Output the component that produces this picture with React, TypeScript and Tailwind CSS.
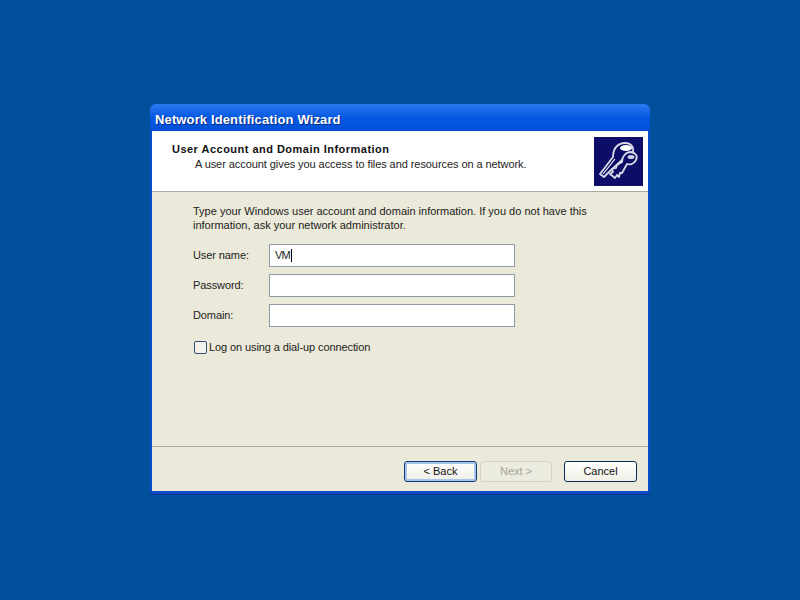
const font = { fontFamily: '"Liberation Sans", sans-serif' }

const KeysIcon = () => (
    <svg width="49" height="49" viewBox="0 0 49 49" className="block">
        <defs>
            <pattern id="dots" width="2" height="2" patternUnits="userSpaceOnUse">
                <rect width="2" height="2" fill="#0a0a60" />
                <rect width="1" height="1" fill="#16167c" />
            </pattern>
        </defs>
        <rect width="49" height="49" fill="url(#dots)" />
        <g fill="#0c0c66" stroke="#dcdce8" strokeWidth="1.8" strokeLinejoin="round">
            <path d="M6 37 L19 20 C19 10 25 6 31 6 C37 6 40 10 39 15 L28 23 L15 35 L10 40 Z" />
            <path d="M21 41 L16 37 L19 35 L18 32 L22 31 L23 28 L28 25 C28 19 32 15 37 15 C42 16 44 19 42 23 C40 27 36 28 33 27 L28 36 L26 36 L25 40 L23 38 Z" />
        </g>
        <path d="M9 37 L21 22" stroke="#ffffff" strokeWidth="1.2" />
        <ellipse cx="32" cy="11" rx="6" ry="3" fill="#ffffff" />
        <ellipse cx="37" cy="20" rx="3.5" ry="2" fill="#d0d0e4" />
    </svg>
)

const Field = ({ label, value }: { label: string; value?: string }) => (
    <div className="flex items-center h-[23px]">
        <label className="w-[76px] text-[11px] text-[#222] tracking-[-0.1px]">{label}</label>
        <div className="w-[246px] h-[23px] bg-white border border-[#8f9aa6] flex items-center pl-[5px] text-[11px] text-[#222] tracking-[-0.8px]">
            {value}
            {value && <span className="w-px h-[13px] ml-px bg-black" />}
        </div>
    </div>
)

const WizardButton = ({ label, isDefault, disabled }: { label: string; isDefault?: boolean; disabled?: boolean }) => {
    let cls = 'w-[73px] border-[#0a2a5c] bg-gradient-to-b from-white to-[#f0efe6] text-[#111]'
    if (isDefault) cls = 'w-[73px] border-[#0f3a78] bg-gradient-to-b from-white to-[#f0efe6] text-[#111] shadow-[inset_0_0_0_2px_#a9c4ea]'
    if (disabled) cls = 'w-[72px] border-[#d6d3c4] bg-[#ecebe0] text-[#a5a496]'
    return (
        <button className={`h-[21px] rounded-[3px] border text-[11px] ${cls}`}>
            {label}
        </button>
    )
}

export default function App() {
    return (
        <div className="w-[800px] h-[600px] bg-[#02509b] flex items-center justify-center pb-px" style={font}>
            <div className="w-[500px] h-[391px] flex flex-col rounded-t-[6px] bg-[#0b4bc8] px-[2px] pb-[3px] border-b border-[#0a2f9a]">
                {/* Title bar */}
                <div className="h-[27px] flex items-center -mx-[2px] pl-[5px] pt-[5px] rounded-t-[6px] bg-gradient-to-b from-[#2a78f0] via-[#0458e2] to-[#0351d8]">
                    <span className="text-[13px] font-bold text-white tracking-[0.13px] [text-shadow:1px_1px_0_#0a2a80]">
                        Network Identification Wizard
                    </span>
                </div>

                {/* Header */}
                <div className="h-[61px] bg-white border-b border-[#a9a89c] flex justify-between pr-[5px] pt-[6px]">
                    <div className="pl-[20px] pt-[6px]">
                        <h1 className="text-[11px] font-bold text-[#111] leading-[13px] tracking-[0.48px]">User Account and Domain Information</h1>
                        <p className="pl-[23px] text-[11px] text-[#222] leading-[13px] mt-[2px] tracking-[-0.07px]">A user account gives you access to files and resources on a network.</p>
                    </div>
                    <KeysIcon />
                </div>

                {/* Body */}
                <div className="flex-1 bg-[#ebe9d9] pl-[41px] pt-[12px] border-b border-[#a9a89c]">
                    <p className="w-[420px] text-[11px] leading-[14px] text-[#222]">
                        Type your Windows user account and domain information. If you do not have this information, ask your network administrator.
                    </p>
                    <div className="flex flex-col gap-[7px] mt-[12px]">
                        <Field label="User name:" value="VM" />
                        <Field label="Password:" />
                        <Field label="Domain:" />
                    </div>
                    <div className="flex items-center gap-[2px] mt-[12px] pl-px text-[11px] text-[#222] tracking-[-0.1px]">
                        <span className="w-[13px] h-[13px] rounded-[2px] border border-[#33507a] bg-[#f2f1ea]" />
                        <span>Log on using a dial-up connection</span>
                    </div>
                </div>

                {/* Footer */}
                <div className="h-[44px] bg-[#ebe9d9] flex justify-end pt-[14px] pr-[11px]">
                    <WizardButton label="< Back" isDefault />
                    <div className="w-[3px]" />
                    <WizardButton label="Next >" disabled />
                    <div className="w-[12px]" />
                    <WizardButton label="Cancel" />
                </div>
            </div>
        </div>
    )
}
